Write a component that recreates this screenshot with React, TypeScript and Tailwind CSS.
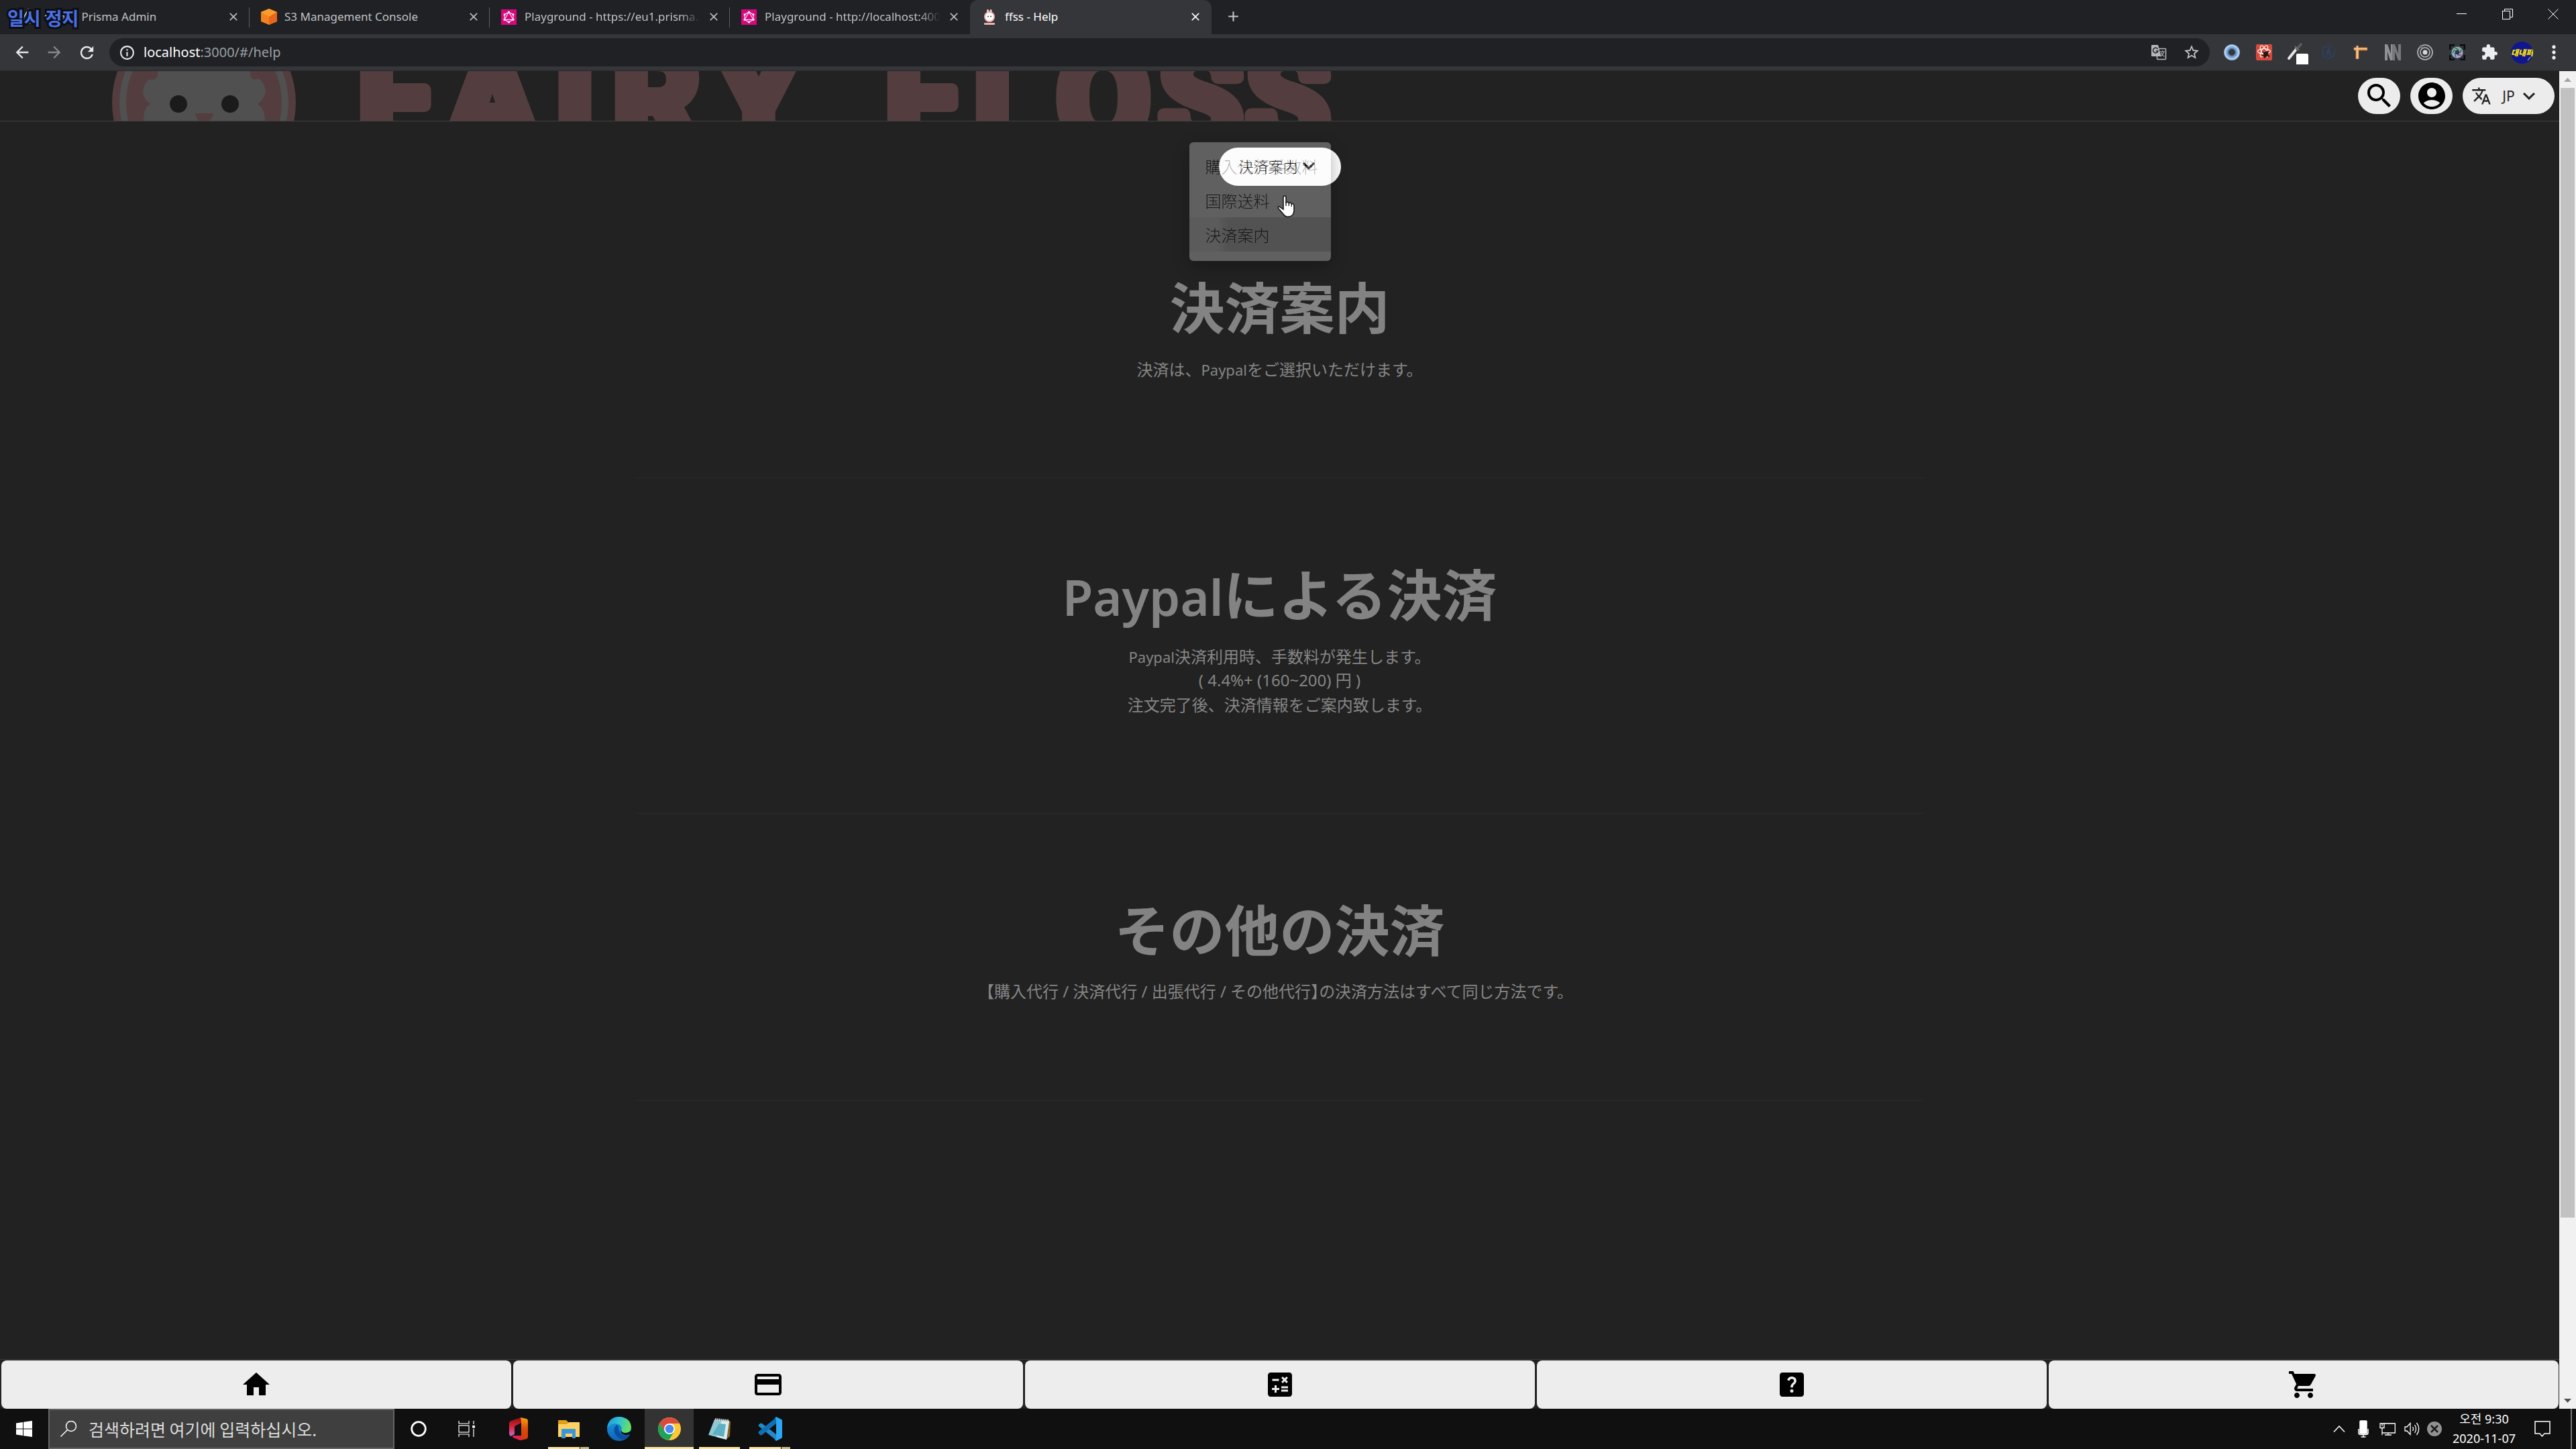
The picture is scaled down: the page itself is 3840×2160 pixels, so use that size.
import React from "react";
import {
  MdAccountCircle,
  MdArrowBack,
  MdArrowForward,
  MdCalculate,
  MdClose,
  MdCreditCard,
  MdExpandMore,
  MdExtension,
  MdHelpCenter,
  MdHome,
  MdInfoOutline,
  MdMoreVert,
  MdRefresh,
  MdSearch,
  MdShoppingCart,
  MdStarBorder,
  MdTranslate,
  MdAdd,
} from "react-icons/md";

const UI = "font-['Noto_Sans','Noto_Sans_CJK_KR',sans-serif]";

/* ---------- Favicons ---------- */

function PrismaIcon() {
  return (
    <svg viewBox="0 0 26 26" className="size-[26px] shrink-0" aria-hidden="true">
      <path d="M12 2 L21 20 L9 24 L5 15 Z" fill="#123244" stroke="#e8f1f5" strokeWidth="1.4" strokeLinejoin="round" />
      <path d="M12 3 L9 23" stroke="#4b8fae" strokeWidth="1.4" />
    </svg>
  );
}

function S3Icon() {
  return (
    <svg viewBox="0 0 26 26" className="size-[26px] shrink-0" aria-hidden="true">
      <path d="M13 1 L25 6 V20 L13 25 L1 20 V6 Z" fill="#f58220" />
      <path d="M13 1 L25 6 L13 13 L1 6 Z" fill="#fb9c2e" />
      <path d="M13 13 L25 6 V20 L13 25 Z" fill="#e8651c" />
    </svg>
  );
}

function GraphqlIcon() {
  return (
    <svg viewBox="0 0 26 26" className="size-[26px] shrink-0" aria-hidden="true">
      <rect x="1" y="2" width="23" height="23" fill="#d6087f" />
      <g fill="none" stroke="#fbd9ec" strokeWidth="1.2">
        <path d="M12.5 6 L19 9.7 V17.3 L12.5 21 L6 17.3 V9.7 Z" />
        <path d="M12.5 6 L19 17.3 H6 Z" />
      </g>
      <g fill="#fff">
        <circle cx="12.5" cy="6" r="1.5" />
        <circle cx="19" cy="9.7" r="1.5" />
        <circle cx="19" cy="17.3" r="1.5" />
        <circle cx="12.5" cy="21" r="1.5" />
        <circle cx="6" cy="17.3" r="1.5" />
        <circle cx="6" cy="9.7" r="1.5" />
      </g>
    </svg>
  );
}

function FairyIcon() {
  return (
    <svg viewBox="0 0 26 26" className="size-[26px] shrink-0" aria-hidden="true">
      <rect x="9" y="2" width="3" height="8" rx="1.5" fill="#f7cfcd" />
      <rect x="13.500" y="2" width="3" height="8" rx="1.5" fill="#f7cfcd" />
      <circle cx="13" cy="13" r="8" fill="#f3b3b1" />
      <circle cx="13" cy="13" r="6" fill="#fff" />
      <circle cx="11" cy="12.500" r="1" fill="#333" />
      <circle cx="15" cy="12.500" r="1" fill="#333" />
      <rect x="5" y="22" width="16" height="3" rx="1" fill="#efaead" />
    </svg>
  );
}

/* ---------- Browser chrome ---------- */

type TabProps = { icon: React.ReactNode; title: string; fade?: boolean; active?: boolean; divider?: boolean };

function Tab({ icon, title, fade, active, divider }: TabProps) {
  return (
    <div
      className={
        active
          ? "relative flex h-full w-[360px] items-center gap-[10px] rounded-t-xl bg-[#35363a] pr-[14px] pb-[2px] pl-4 text-white"
          : "relative flex h-full w-[358px] items-center gap-[10px] pr-[14px] pb-[2px] pl-4 text-[#bfc2c6]"
      }
    >
      {icon}
      <span
        className={
          fade
            ? "min-w-0 flex-1 overflow-hidden whitespace-nowrap [mask-image:linear-gradient(90deg,#000_88%,transparent)]"
            : "min-w-0 flex-1 overflow-hidden whitespace-nowrap"
        }
      >
        {title}
      </span>
      <button type="button" aria-label={`Close ${title}`} className="shrink-0">
        <MdClose className="size-[20px]" />
      </button>
      {divider && <span className="absolute top-[11px] right-0 h-[30px] w-px bg-[#5b5d61]" />}
    </div>
  );
}

function WindowButtons() {
  return (
    <div className="ml-auto flex h-[42px] items-center text-white">
      <button type="button" aria-label="Minimize" className="flex w-[68px] justify-center">
        <svg viewBox="0 0 16 16" className="size-4"><path d="M0 7.500 H15" stroke="currentColor" /></svg>
      </button>
      <button type="button" aria-label="Restore" className="flex w-[68px] justify-center">
        <svg viewBox="0 0 16 16" className="size-4" fill="none" stroke="currentColor">
          <rect x="0.500" y="3.500" width="11" height="12" />
          <path d="M3.500 3.500 V0.500 H15.500 V12.500 H11.500" />
        </svg>
      </button>
      <button type="button" aria-label="Close window" className="flex w-[68px] justify-center">
        <svg viewBox="0 0 16 16" className="size-4"><path d="M0.500 0.500 L15.500 15.500 M15.500 0.500 L0.500 15.500" stroke="currentColor" /></svg>
      </button>
    </div>
  );
}

function TabStrip() {
  return (
    <div className={`relative flex h-[51px] shrink-0 bg-[#202124] pl-[14px] text-[17px] ${UI}`}>
      <Tab icon={<PrismaIcon />} title="Code - Prisma Admin" divider />
      <Tab icon={<S3Icon />} title="S3 Management Console" divider />
      <Tab icon={<GraphqlIcon />} title="Playground - https://eu1.prisma.sh" fade divider />
      <Tab icon={<GraphqlIcon />} title="Playground - http://localhost:4000" fade />
      <Tab icon={<FairyIcon />} title="ffss - Help" active />
      <button type="button" aria-label="New tab" className="ml-[20px] flex items-center pb-[2px] text-[#c4c7ca]">
        <MdAdd className="size-[25px]" />
      </button>
      <WindowButtons />
      <div className="absolute top-[10px] left-[11px] text-[27px] leading-[36px] font-bold whitespace-nowrap text-[#4a6fe8] [-webkit-text-stroke:6px_#0d0f14] [paint-order:stroke_fill]">
        일시 정지
      </div>
    </div>
  );
}

function Toolbar() {
  return (
    <div className={`flex h-[55px] shrink-0 items-center border-b border-[#27282b] bg-[#35363a] pr-[9px] pl-[19px] ${UI}`}>
      <button type="button" aria-label="Back" className="w-[48px] text-[#e8eaed]">
        <MdArrowBack className="size-[28px]" />
      </button>
      <button type="button" aria-label="Forward" className="w-[48px] text-[#86888c]">
        <MdArrowForward className="size-[28px]" />
      </button>
      <button type="button" aria-label="Reload" className="w-[48px] text-[#e8eaed]">
        <MdRefresh className="size-[29px]" />
      </button>
      <div className="flex h-[42px] min-w-0 flex-1 items-center gap-3 rounded-full bg-[#202124] pr-[14px] pl-[14px]">
        <MdInfoOutline className="size-[25px] shrink-0 text-[#e8eaed]" />
        <div className="relative min-w-0 flex-1 text-[20px] leading-[30px]">
          <input
            aria-label="Address"
            defaultValue="localhost:3000/#/help"
            className="w-full bg-transparent text-[#9aa0a6] outline-none"
          />
          <span aria-hidden="true" className="absolute top-0 left-0 bg-[#202124] text-white">localhost</span>
        </div>
        <button type="button" aria-label="Translate page" className="mr-[12px]">
          <svg viewBox="0 0 24 24" className="size-[24px]">
            <rect x="9.500" y="6.500" width="13" height="16" rx="1" fill="#202124" stroke="#b5b8bc" strokeWidth="1.500" />
            <path d="M2 1 H11 L15.500 18 H2 Q1 18 1 17 V2 Q1 1 2 1 Z" fill="#b5b8bc" />
            <path d="M10.500 7 A3.800 3.800 0 1 0 11 10 H7.500" fill="none" stroke="#202124" strokeWidth="1.500" />
            <path d="M14 11 H21 M17.500 9.500 V11 M19.500 11 Q18.500 16 14.500 18 M15.500 12.500 Q17 16.500 20.500 18.500" fill="none" stroke="#b5b8bc" strokeWidth="1.200" />
          </svg>
        </button>
        <button type="button" aria-label="Bookmark">
          <MdStarBorder className="size-[26px] text-[#c4c7ca]" />
        </button>
      </div>
      <Extensions />
    </div>
  );
}

function Extensions() {
  return (
    <div className="ml-[9px] flex items-center [&>button]:flex [&>button]:w-[48px] [&>button]:justify-center">
      <button type="button" aria-label="JSON viewer">
        <svg viewBox="0 0 24 24" className="size-[24px]">
          <circle cx="12" cy="12" r="8.500" fill="none" stroke="#86aedb" strokeWidth="7" />
          <circle cx="12" cy="12" r="10" fill="none" stroke="#c3d9ef" strokeWidth="1.500" />
          <circle cx="12" cy="12" r="6" fill="none" stroke="#4f7fb8" strokeWidth="1.500" />
        </svg>
      </button>
      <button type="button" aria-label="React developer tools">
        <svg viewBox="0 0 24 24" className="size-[24px]" fill="none">
          <rect width="24" height="24" rx="2" fill="#d64b3c" />
          <g stroke="#fff" strokeWidth="1.100">
            <ellipse cx="12" cy="10.500" rx="9.500" ry="3.700" />
            <ellipse cx="12" cy="10.500" rx="9.500" ry="3.700" transform="rotate(60 12 10.500)" />
            <ellipse cx="12" cy="10.500" rx="9.500" ry="3.700" transform="rotate(120 12 10.500)" />
          </g>
          <ellipse cx="14.500" cy="15" rx="3.500" ry="5" fill="#2a1614" transform="rotate(30 14.500 15)" />
          <path d="M9 11 L20 19 M9 17 H20 M12 21 L18 10" stroke="#2a1614" strokeWidth="1.300" />
        </svg>
      </button>
      <button type="button" aria-label="Colour picker">
        <svg viewBox="0 0 36 36" className="size-[36px]">
          <path d="M7 27 L19 12" stroke="#e6e6e6" strokeWidth="4" strokeLinecap="round" />
          <path d="M19 13 L25 6" stroke="#5a5a5a" strokeWidth="4" strokeLinecap="round" />
          <path d="M16 9 L22 15" stroke="#6f6f6f" strokeWidth="2" />
          <rect x="18" y="20" width="18" height="17" rx="2" fill="#fff" />
        </svg>
      </button>
      <button type="button" aria-label="Apollo">
        <svg viewBox="0 0 24 24" className="size-[22px]" fill="none" stroke="#2c4260" strokeWidth="1.800">
          <path d="M18.500 4 A10 10 0 1 0 21.500 9" />
          <path d="M8 17 L12 6.500 L16 17 M9.500 13.500 H14.500" strokeWidth="2.400" />
        </svg>
      </button>
      <button type="button" aria-label="Page ruler">
        <svg viewBox="0 0 24 24" className="size-[22px]">
          <path d="M1 4 H23 V9 H9 V23 H4 V9 H1 Z" fill="#e08b3a" />
          <path d="M5 1 H8 V22 H5 Z M1 5 H22 V7 H1 Z" fill="#f3c48f" />
        </svg>
      </button>
      <button type="button" aria-label="Nimbus">
        <svg viewBox="0 0 24 24" className="size-[24px]">
          <path d="M0 0 H4 L9 14 V0 H12 V24 H8 L4 11 V24 H0 Z" fill="#8f9092" />
          <path d="M11 0 H15 L20 14 V0 H24 V24 H20 L15 11 V24 H11 Z" fill="#77787b" />
        </svg>
      </button>
      <button type="button" aria-label="Target">
        <svg viewBox="0 0 24 24" className="size-[24px]" fill="none" stroke="#bcbcbe">
          <circle cx="12" cy="12" r="11" strokeWidth="1.600" />
          <circle cx="12" cy="12" r="7" strokeWidth="1.600" />
          <circle cx="12" cy="12" r="3.500" fill="#d5d5d7" stroke="none" />
          <circle cx="6" cy="3.500" r="2.500" fill="#77787b" stroke="none" />
        </svg>
      </button>
      <button type="button" aria-label="Screen capture">
        <svg viewBox="0 0 24 24" className="size-[24px]" fill="none">
          <path d="M1 8 V1 H8 M16 1 H23 V8 M23 16 V23 H16 M8 23 H1 V16" stroke="#0b0b0c" strokeWidth="3" />
          <circle cx="12" cy="12" r="6" stroke="#7ab0a8" strokeWidth="5" />
          <path d="M6 12 A6 6 0 0 0 12 18" stroke="#8fb3d9" strokeWidth="5" />
          <path d="M12 18 A6 6 0 0 0 18 12" stroke="#b59ad6" strokeWidth="5" />
          <path d="M8 5 L14 8 M5 13 L8 8 M10 19 L8 13 M18 16 L12 16 M18 8 L16 13" stroke="#35363a" />
        </svg>
      </button>
      <button type="button" aria-label="Extensions">
        <MdExtension className="size-[26px] text-[#eceef1]" />
      </button>
      <button type="button" aria-label="Profile">
        <svg viewBox="0 0 33 33" className="size-[33px]">
          <circle cx="16.500" cy="16.500" r="16.500" fill="#10168f" />
          <text x="16.500" y="21" textAnchor="middle" fontSize="12" fontWeight="900" fontStyle="italic" fontFamily="'Noto Sans CJK KR', sans-serif" fill="#ffe500">
            대내퍼
          </text>
          <path d="M25 28 L29 23" stroke="#bbb" strokeWidth="1.200" />
        </svg>
      </button>
      <button type="button" aria-label="Menu">
        <MdMoreVert className="size-[32px] text-[#eceef1]" />
      </button>
    </div>
  );
}

/* ---------- Shop page ---------- */

function BrandLogo() {
  return (
    <svg viewBox="160 106 1850 74" className="ml-[160px] h-[74px] w-[1850px] shrink-0" role="img" aria-label="Fairy Floss">
      <circle cx="304" cy="153" r="137" fill="#533d3e" />
      <circle cx="304" cy="153" r="121" fill="none" stroke="#505050" strokeWidth="10" />
      <path
        d="M235 95 V114 Q229 121 222 118 Q213 126 213 140 Q216 150 224 155 Q214 161 214 176 V190 H395 V176 Q393 160 384 155 Q392 150 396 138 Q396 125 386 117 Q378 121 373 114 V95 Z"
        fill="#505050"
      />
      <circle cx="266" cy="155" r="13" fill="#1b1b1b" />
      <circle cx="343" cy="155" r="13" fill="#1b1b1b" />
      <path d="M291 169 H318 Q316 180 304 186 Q293 180 291 169 Z" fill="#533d3e" />
      <text
        x="589 734 857 978 1131 1250 1375 1506 1645 1790 1920"
        y="216"
        textAnchor="middle"
        fontSize="200"
        fontWeight="700"
        fontFamily="Roboto, sans-serif"
        fill="#533d3e"
        stroke="#533d3e"
        strokeWidth="20"
        strokeLinejoin="round"
      >
        FAIRY FLOSS
      </text>
    </svg>
  );
}

function ShopHeader() {
  return (
    <header className="flex h-[75px] shrink-0 items-start overflow-hidden border-b border-[#414141] bg-[#222]">
      <BrandLogo />
      <div className="ml-auto flex gap-[15px] pt-[10px] pr-[7px] text-black">
        <button type="button" aria-label="Search" className="flex h-[54px] w-[63px] items-center justify-center rounded-full bg-[#ececec]">
          <MdSearch className="size-[48px]" />
        </button>
        <button type="button" aria-label="Account" className="flex h-[54px] w-[63px] items-center justify-center rounded-full bg-[#ececec]">
          <MdAccountCircle className="size-[48px]" />
        </button>
        <button type="button" className="flex h-[54px] w-[137px] items-center rounded-full bg-[#ececec] pl-[13px] text-[#222]">
          <MdTranslate className="size-[30px]" />
          <span className={`ml-[13px] w-[25px] text-[21px] leading-[32px] ${UI}`}>JP</span>
          <MdExpandMore className="size-[36px]" />
        </button>
      </div>
    </header>
  );
}

function Latin({ children }: { children: React.ReactNode }) {
  return <span className="font-['Noto_Sans',sans-serif] text-[22px] leading-none">{children}</span>;
}

function Section({ title, children }: { title: React.ReactNode; children: React.ReactNode }) {
  return (
    <section className="border-b border-[#2a2a2a] pt-[121px] pb-[144px] text-center">
      <h2 className="h-[98px] text-[82px] leading-[98px] font-bold text-[#838383]">{title}</h2>
      <div className="mt-[28px] text-[24px] leading-[36px] text-[#858585]">{children}</div>
    </section>
  );
}

const topics = ["購入代行手数料", "国際送料", "決済案内"];

function TopicPicker() {
  return (
    <div className="relative mx-auto mt-[39px] mb-2 w-[182px]">
      <button
        type="button"
        aria-haspopup="listbox"
        className="flex h-[57px] w-full items-center rounded-full bg-[#fcfcfc] pb-[3px] pl-[30px] text-[22px] font-light text-black"
      >
        <span className="whitespace-nowrap">決済案内</span>
        <MdExpandMore className="-ml-[2px] size-[36px]" />
      </button>
      <ul
        role="listbox"
        aria-label="案内"
        className="absolute -top-2 -left-11 w-[211px] rounded-md bg-white pt-[10px] pb-[14px] text-[24px] leading-[51px] font-light text-black opacity-[0.28] shadow-[0_8px_24px_#000]"
      >
        {topics.map((topic, i) => (
          <li
            key={topic}
            role="option"
            aria-selected={i === 2}
            className={i === 2 ? "bg-linear-to-r from-[#eee] from-20% to-[#cdcdcd] to-28% pl-6" : "pl-6"}
          >
            {topic}
          </li>
        ))}
      </ul>
      <svg viewBox="0 0 26 34" className="absolute top-[71px] left-[87px] h-[34px] w-[26px]" aria-hidden="true">
        <path
          d="M9 3 Q9 1 11 1 Q13 1 13 3 V11 Q16 9 17.500 12 Q20 10 21.500 13 Q25 12 25 16 V23 Q24 32 17 32 Q12 33 9 28 L2 20 Q0 17 3 17 L9 21 Z"
          fill="#fff"
          stroke="#111"
          strokeWidth="1.500"
        />
        <path d="M13 11 V16 M17.300 12 V16 M21.300 13 V17" stroke="#111" strokeWidth="1.300" />
      </svg>
    </div>
  );
}

function ShopNav() {
  const items = [
    { label: "Home", Icon: MdHome },
    { label: "Payment", Icon: MdCreditCard },
    { label: "Calculator", Icon: MdCalculate },
    { label: "Help", Icon: MdHelpCenter },
    { label: "Cart", Icon: MdShoppingCart },
  ];
  return (
    <nav className="flex h-[74px] shrink-0 gap-[3px] border-t border-[#3c3c3c] bg-[#222] pt-px pr-px pl-[2px]">
      {items.map(({ label, Icon }) => (
        <button key={label} type="button" aria-label={label} className="flex flex-1 items-center justify-center rounded-lg bg-[#ededed] text-black">
          <Icon className="size-[48px]" />
        </button>
      ))}
    </nav>
  );
}

function ScrollBar() {
  return (
    <div className="flex w-[25px] shrink-0 flex-col items-center bg-[#f1f1f1]">
      <svg viewBox="0 0 25 25" className="size-[25px] shrink-0"><path d="M7 16 L12.500 10 L18 16 Z" fill="#a3a3a3" /></svg>
      <div className="h-[1684px] w-[21px] bg-[#c1c1c1]" />
      <svg viewBox="0 0 25 25" className="mt-auto size-[25px] shrink-0"><path d="M7 10 L12.500 16 L18 10 Z" fill="#505050" /></svg>
    </div>
  );
}

function ShopPage() {
  return (
    <div className="flex min-h-0 flex-1 bg-[#222]">
      <div className="flex min-w-0 flex-1 flex-col font-['Noto_Sans_CJK_JP',sans-serif]">
        <ShopHeader />
        <main className="min-h-0 flex-1 overflow-hidden">
          <TopicPicker />
          <div className="mx-auto max-w-[1920px]">
            <Section title="決済案内">
              <p>決済は、<Latin>Paypal</Latin>をご選択いただけます。</p>
            </Section>
            <Section
              title={
                <>
                  <span className="font-['Noto_Sans',sans-serif] text-[74px] leading-none font-semibold">Paypal</span>による決済
                </>
              }
            >
              <p><Latin>Paypal</Latin>決済利用時、手数料が発生します。</p>
              <p className="font-['Noto_Sans','Noto_Sans_CJK_JP',sans-serif]">( 4.4%+ (160~200) 円 )</p>
              <p>注文完了後、決済情報をご案内致します。</p>
            </Section>
            <Section title="その他の決済">
              <p className="font-['Noto_Sans','Noto_Sans_CJK_JP',sans-serif]">
                <span className="[font-feature-settings:'halt']">【</span>購入代行 / 決済代行 / 出張代行 / その他代行
                <span className="[font-feature-settings:'halt']">】</span>の決済方法はすべて同じ方法です。
              </p>
            </Section>
          </div>
        </main>
        <ShopNav />
      </div>
      <ScrollBar />
    </div>
  );
}

/* ---------- Taskbar ---------- */

type TaskProps = { label: string; running?: boolean; stacked?: boolean; active?: boolean; children: React.ReactNode };

function TaskButton({ label, running, stacked, active, children }: TaskProps) {
  return (
    <button
      type="button"
      aria-label={label}
      className={active ? "relative flex h-full w-[73px] items-center justify-center bg-[#333]" : "relative flex h-full w-[73px] items-center justify-center"}
    >
      {children}
      {active && <span className="absolute inset-x-0 bottom-0 h-[3px] bg-[#fbe3a9]" />}
      {running && (
        <span className="absolute inset-x-[6px] bottom-0 flex h-[3px] gap-px">
          <span className="flex-1 bg-[#fbe3a9]" />
          {stacked && <span className="w-[13px] bg-[#c9b98f]" />}
        </span>
      )}
    </button>
  );
}

function Taskbar() {
  return (
    <div className={`flex h-[60px] shrink-0 items-center bg-[#101010] text-white ${UI}`}>
      <button type="button" aria-label="Start" className="flex w-[72px] justify-center">
        <svg viewBox="0 0 24 24" className="size-[24px]" fill="#fff">
          <path d="M0 3.500 L10 2 V11.500 H0 Z M11 1.800 L24 0 V11.500 H11 Z M0 12.500 H10 V22 L0 20.500 Z M11 12.500 H24 V24 L11 22.200 Z" />
        </svg>
      </button>
      <label className="flex h-full w-[516px] items-center gap-[18px] border-2 border-[#646464] bg-[#3f3f3f] pl-[16px]">
        <svg viewBox="0 0 24 24" className="size-[24px] shrink-0" fill="none" stroke="#fff" strokeWidth="1.500">
          <circle cx="16" cy="8" r="7.500" />
          <path d="M10.500 13.500 L0.500 23.500" />
        </svg>
        <input
          aria-label="Search"
          placeholder="검색하려면 여기에 입력하십시오."
          className="min-w-0 flex-1 bg-transparent font-['Noto_Sans_CJK_KR',sans-serif] text-[25px] leading-[36px] outline-none placeholder:text-[#dcdcdc]"
        />
      </label>
      <button type="button" aria-label="Cortana" className="flex w-[72px] justify-center">
        <svg viewBox="0 0 24 24" className="size-[24px]"><circle cx="12" cy="12" r="10.300" fill="none" stroke="#fff" strokeWidth="2.800" /></svg>
      </button>
      <button type="button" aria-label="Task view" className="mr-[4px] flex w-[72px] justify-center">
        <svg viewBox="0 0 26 24" className="h-[24px] w-[26px]" fill="none" stroke="#fff" strokeWidth="1.200">
          <path d="M1 0 V4 H16 V0 M1 24 V20 H16 V24 M23 0 V5 M23 12 V24" />
          <rect x="1" y="7" width="15" height="10" />
          <rect x="21.800" y="7.500" width="2.500" height="2.500" fill="#fff" />
        </svg>
      </button>
      <div className="flex h-full gap-[2px]">
        <TaskButton label="Office">
          <svg viewBox="0 0 28 34" className="h-[34px] w-[28px]">
            <defs>
              <linearGradient id="office-left" x1="0" y1="0" x2="0" y2="1">
                <stop offset="0" stopColor="#8f0b10" />
                <stop offset="0.5" stopColor="#d8263a" />
                <stop offset="1" stopColor="#c66bd0" />
              </linearGradient>
              <linearGradient id="office-right" x1="0" y1="0" x2="0" y2="1">
                <stop offset="0" stopColor="#f5a30a" />
                <stop offset="0.5" stopColor="#e04a0a" />
                <stop offset="1" stopColor="#d13a05" />
              </linearGradient>
            </defs>
            <path d="M17 0 L18 8 L8 13 V25 L2 28 Q0 26 0 24 V9 Q0 6 3 5 Z" fill="url(#office-left)" />
            <path d="M17 0 L26 2 Q28 3 28 5 V29 Q28 31 26 32 L17 34 L18 28 V7 Z" fill="url(#office-right)" />
            <path d="M6 27 H18 V34 H16 L6 30 Q4 28 6 27 Z" fill="#e0234e" />
          </svg>
        </TaskButton>
        <TaskButton label="File Explorer" running stacked>
          <svg viewBox="0 0 32 27" className="h-[27px] w-[32px]">
            <path d="M0 0 H12 L15 3 V8 H0 Z" fill="#e0a012" />
            <path d="M0 6 H13 L16 3 H31 Q32 3 32 4 V25 H0 Z" fill="#fdd262" />
            <path d="M5 27 V14 Q5 13 6 13 H25 Q26 13 26 14 V27 H21 V20 H11 V27 Z" fill="#3b97d9" />
          </svg>
        </TaskButton>
        <TaskButton label="Edge">
          <svg viewBox="0 0 36 36" className="size-[36px]">
            <defs>
              <linearGradient id="edge-top" x1="0" y1="0" x2="1" y2="0.3">
                <stop offset="0" stopColor="#1d8fdc" />
                <stop offset="0.5" stopColor="#2fc0d8" />
                <stop offset="1" stopColor="#63e063" />
              </linearGradient>
              <linearGradient id="edge-low" x1="0" y1="0" x2="0" y2="1">
                <stop offset="0" stopColor="#1aa0e4" />
                <stop offset="1" stopColor="#0c63b8" />
              </linearGradient>
            </defs>
            <circle cx="18" cy="18" r="18" fill="url(#edge-low)" />
            <path d="M0 17 Q2 0 18 0 Q35 1 36 16 Q35 24 27 24 Q20 24 21 20 Q23 16 19 12 Q9 6 0 17 Z" fill="url(#edge-top)" />
            <path d="M14 12 Q9 17 11 24 Q15 33 25 34 Q30 32 33 27 Q28 29 23 27 Q16 23 17 14 Z" fill="#0d4f9e" />
            <path d="M21 20 Q19 25 26 27 Q30 28 33 26 L36 30 L36 20 Q33 24 27 24 Q22 24 21 20 Z" fill="#101010" />
          </svg>
        </TaskButton>
        <TaskButton label="Chrome" active>
          <svg viewBox="0 0 34 34" className="size-[34px]">
            <circle cx="17" cy="17" r="17" fill="#fcc934" />
            <path d="M17 17 L9.500 21 L2.300 8.500 A17 17 0 0 1 31.700 9 H17 Z" fill="#dc4a3d" />
            <path d="M9.500 21 L2.300 8.500 A17 17 0 0 0 16 34 L24 21 L17 17 Z" fill="#1fa35b" />
            <circle cx="17" cy="17" r="8" fill="#fff" />
            <circle cx="17" cy="17" r="6.300" fill="#4a8af4" />
          </svg>
        </TaskButton>
        <TaskButton label="Notepad" running>
          <svg viewBox="0 0 34 32" className="h-[32px] w-[34px]">
            <path d="M28 3 L33 5 L32 27 L27 31 Z" fill="#8a6425" />
            <path d="M9 2 L31 4 L27 32 L0 25 Z" fill="#8fc7d4" />
            <path d="M20 3 L31 4 L27 32 L12 28 Z" fill="#d8eef2" />
            <path d="M16 8 L26 9 L23 28 L6 24 Z" fill="#5fb0c2" />
            <path d="M10 2 L30 4" stroke="#c9c9c9" strokeWidth="4" strokeDasharray="2 1" />
          </svg>
        </TaskButton>
        <TaskButton label="Visual Studio Code" running stacked>
          <svg viewBox="0 0 36 36" className="size-[36px]">
            <path d="M3 10 L1 12 Q0 13 1 14 L27 35 V26 L6 10 Q4 9 3 10 Z" fill="#2489ca" />
            <path d="M3 27 L1 25 Q0 24 1 22 L27 1 V10 L6 27 Q4 28 3 27 Z" fill="#1070b3" />
            <path d="M27 0 L35 4 Q36 5 36 6 V30 Q36 31 35 32 L27 36 L25 34 Q27 34 27 32 V4 Q27 2 25 2 Z" fill="#2aa6f2" />
          </svg>
        </TaskButton>
      </div>
      <div className="ml-auto flex h-full items-center">
        <button type="button" aria-label="Show hidden icons">
          <svg viewBox="0 0 18 10" className="h-[10px] w-[18px]"><path d="M1 9.500 L9 1 L17 9.500" fill="none" stroke="#fff" strokeWidth="1.500" /></svg>
        </button>
        <svg viewBox="0 0 16 26" className="ml-[19px] h-[26px] w-[16px]" fill="none" stroke="#fff" strokeWidth="1.500" role="img" aria-label="Microphone">
          <rect x="3" y="1" width="10" height="19" rx="1" fill="#fff" />
          <path d="M1 13 V19 Q1 21.500 4 21.500 H12 Q15 21.500 15 19 V13 M8 21.500 V25 M4.500 25 H11.500" />
        </svg>
        <svg viewBox="0 0 24 19" className="ml-[16px] h-[19px] w-[24px]" fill="none" stroke="#fff" strokeWidth="1.300" role="img" aria-label="Network">
          <path d="M7 1 H23.300 V15 H4 M4 8 V18.300 M13 15 V18 M8 18 H18" />
          <path d="M1 1 H7 V7.500 H1 Z M4 1 V5" />
        </svg>
        <svg viewBox="0 0 23 20" className="ml-[13px] h-[20px] w-[23px]" fill="none" stroke="#fff" strokeWidth="1.300" role="img" aria-label="Volume">
          <path d="M1 7 H4 L9 1.500 V18.500 L4 13 H1 Z" />
          <path d="M12.500 7 Q14.500 10 12.500 13 M15.500 4 Q19.500 10 15.500 16 M18.500 1 Q25 10 18.500 19" />
        </svg>
        <svg viewBox="0 0 22 22" className="ml-[11px] size-[22px]" role="img" aria-label="Disconnected">
          <circle cx="11" cy="11" r="11" fill="#919191" />
          <path d="M6 6 L16 16 M16 6 L6 16" stroke="#1b1b1b" strokeWidth="2.500" />
        </svg>
        <div className="ml-[14px] flex h-full w-[98px] flex-col items-center justify-center text-[18px] leading-[29px] whitespace-nowrap">
          <span>오전 9:30</span>
          <span>2020-11-07</span>
        </div>
        <button type="button" aria-label="Notifications" className="ml-[26px]">
          <svg viewBox="0 0 24 24" className="size-[24px]"><path d="M1 1 H23 V19 H15 L11.500 23 L8 19 H1 Z" fill="none" stroke="#fff" strokeWidth="1.500" /></svg>
        </button>
        <span className="mr-[6px] ml-[30px] h-full w-[2px] bg-[#777]" />
      </div>
    </div>
  );
}

export default function App() {
  return (
    <div className="flex h-screen w-full flex-col overflow-hidden bg-[#222]">
      <TabStrip />
      <Toolbar />
      <ShopPage />
      <Taskbar />
    </div>
  );
}
